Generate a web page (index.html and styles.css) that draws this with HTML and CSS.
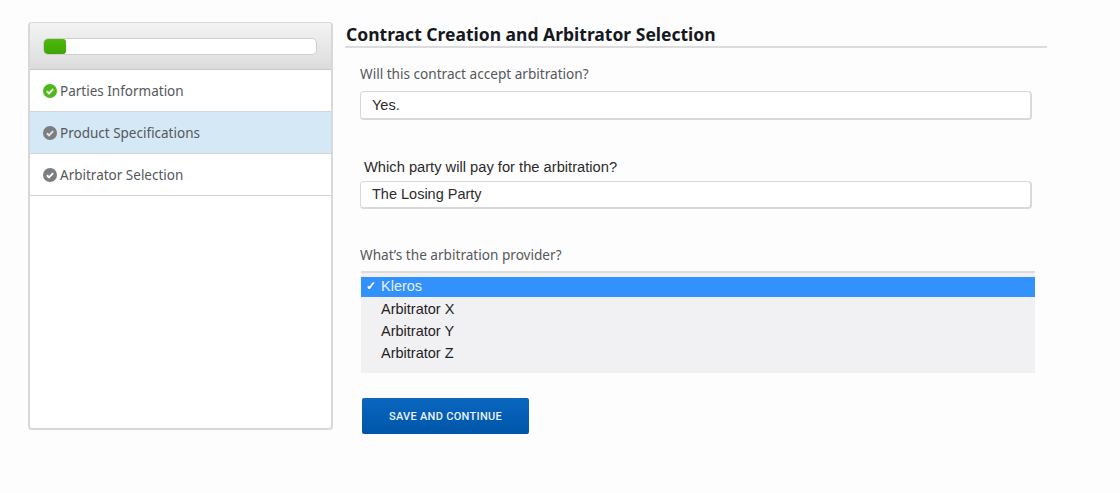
FILE: index.html
```html
<!DOCTYPE html>
<html lang="en">
<head>
    <meta charset="UTF-8">
    <meta name="viewport" content="width=device-width, initial-scale=1.0">
    <title>Contract Creation and Arbitrator Selection</title>
    <link rel="stylesheet" href="styles.css">
</head>
<body>
    <div class="page">
        <!-- steps on the left -->
        <div class="sidebar">
            <div class="sidebar-head">
                <div class="progress"><div class="progress-fill"></div></div>
            </div>
            <div class="step">
                <svg class="step-icon" viewBox="0 0 13 13"><circle cx="6.5" cy="6.5" r="6.5" fill="#4fb81a"/><path d="M3.6 6.7l2 2 3.8-3.9" fill="none" stroke="#fff" stroke-width="1.8"/></svg>
                Parties Information
            </div>
            <div class="step step-active">
                <svg class="step-icon" viewBox="0 0 13 13"><circle cx="6.5" cy="6.5" r="6.5" fill="#7b7d80"/><path d="M3.6 6.7l2 2 3.8-3.9" fill="none" stroke="#dfe6ea" stroke-width="1.8"/></svg>
                Product Specifications
            </div>
            <div class="step">
                <svg class="step-icon" viewBox="0 0 13 13"><circle cx="6.5" cy="6.5" r="6.5" fill="#7b7d80"/><path d="M3.6 6.7l2 2 3.8-3.9" fill="none" stroke="#fff" stroke-width="1.8"/></svg>
                Arbitrator Selection
            </div>
        </div>

        <div class="main">
            <h1 class="title">Contract Creation and Arbitrator Selection</h1>
            <div class="form">
                <div class="label label-first">Will this contract accept arbitration?</div>
                <div class="field field-first">Yes.</div>

                <div class="label-plain">Which party will pay for the arbitration?</div>
                <div class="field field-second">The Losing Party</div>

                <div class="label label-third">What’s the arbitration provider?</div>
                <div class="dropdown">
                    <div class="option option-selected"><span class="tick">✓</span>Kleros</div>
                    <div class="option">Arbitrator X</div>
                    <div class="option">Arbitrator Y</div>
                    <div class="option">Arbitrator Z</div>
                </div>

                <button class="save-btn">SAVE AND CONTINUE</button>
            </div>
        </div>
    </div>
</body>
</html>
```

FILE: styles.css
```css
*{
    margin:0;
    padding:0;
    box-sizing:border-box;
}
body{
    background-color:#fefdfe;
    font-family:"Liberation Sans",Arial,sans-serif;
}
.page{
    display:flex;
    align-items:flex-start;
    padding:22px 0 0 28px;
}

/* sidebar */
.sidebar{
    width:305px;
    height:408px;
    flex-shrink:0;
    background-color:#fff;
    border:2px solid #d8d8dc;
    border-width:1px 2px 2px 2px;
    border-radius:4px;
    overflow:hidden;
}
.sidebar-head{
    height:47px;
    padding:15px 14px 0 13px;
    background:linear-gradient(#f3f3f3,#dcdcdc);
    border-bottom:1px solid #c9c9c9;
}
.progress{
    height:17px;
    background-color:#fff;
    border:1px solid #cfcfcf;
    border-radius:5px;
    overflow:hidden;
}
.progress-fill{
    width:22px;
    height:100%;
    background:linear-gradient(#4fb80c,#3fa506);
    border-radius:3px;
}
.step{
    display:flex;
    align-items:center;
    gap:3px;
    height:42px;
    padding-left:13px;
    font-family:"Noto Sans",sans-serif;
    font-size:13.5px;
    color:#55585c;
    border-bottom:1px solid #d4d4d6;
}
.step-active{
    background-color:#d4e8f5;
}
.step-icon{
    width:14px;
    height:14px;
    flex-shrink:0;
}

/* main column */
.main{
    width:702px;
    margin-left:12px;
}
.title{
    height:26px;
    padding-left:1px;
    font-family:"Noto Sans",sans-serif;
    font-size:17.5px;
    font-weight:700;
    line-height:24px;
    color:#15181c;
    border-bottom:2px solid #dcdcde;
}
.form{
    padding-left:15px;
}
.label{
    font-family:"Noto Sans",sans-serif;
    font-size:13.6px;
    line-height:18px;
    color:#55585c;
}
.label-first{
    margin-top:17px;
}
.label-third{
    margin-top:37px;
}
.label-plain{
    margin-top:38px;
    padding-left:4px;
    font-size:14.7px;
    line-height:18px;
    color:#2b2b2b;
}
.field{
    width:672px;
    padding-left:11px;
    font-size:14.5px;
    color:#2b2b2b;
    background-color:#fff;
    border:2px solid #d8d8dc;
    border-width:1px 2px 2px 1px;
    border-radius:4px;
}
.field-first{
    height:29px;
    margin-top:8px;
    line-height:26px;
}
.field-second{
    height:28px;
    margin-top:5px;
    line-height:25px;
}
.dropdown{
    width:674px;
    height:102px;
    margin:7px 0 0 1px;
    padding-top:4px;
    background-color:#f1f0f2;
    border-top:2px solid #dcdcdc;
}
.option{
    height:22px;
    padding-left:20px;
    font-size:14.5px;
    line-height:22px;
    color:#1f1f1f;
}
.option-selected{
    position:relative;
    height:20px;
    line-height:19px;
    margin-bottom:1px;
    color:#e6f0ff;
    background-color:#3291fb;
}
.tick{
    position:absolute;
    left:5px;
    font-size:12px;
    font-weight:700;
    color:#fff;
}
.save-btn{
    display:block;
    width:167px;
    height:36px;
    margin:25px 0 0 2px;
    font-family:Roboto,sans-serif;
    font-size:11px;
    font-weight:500;
    letter-spacing:0.3px;
    color:#eaf2fb;
    background:linear-gradient(#0a66c0,#0056a8);
    border:none;
    border-radius:2px;
}
```
